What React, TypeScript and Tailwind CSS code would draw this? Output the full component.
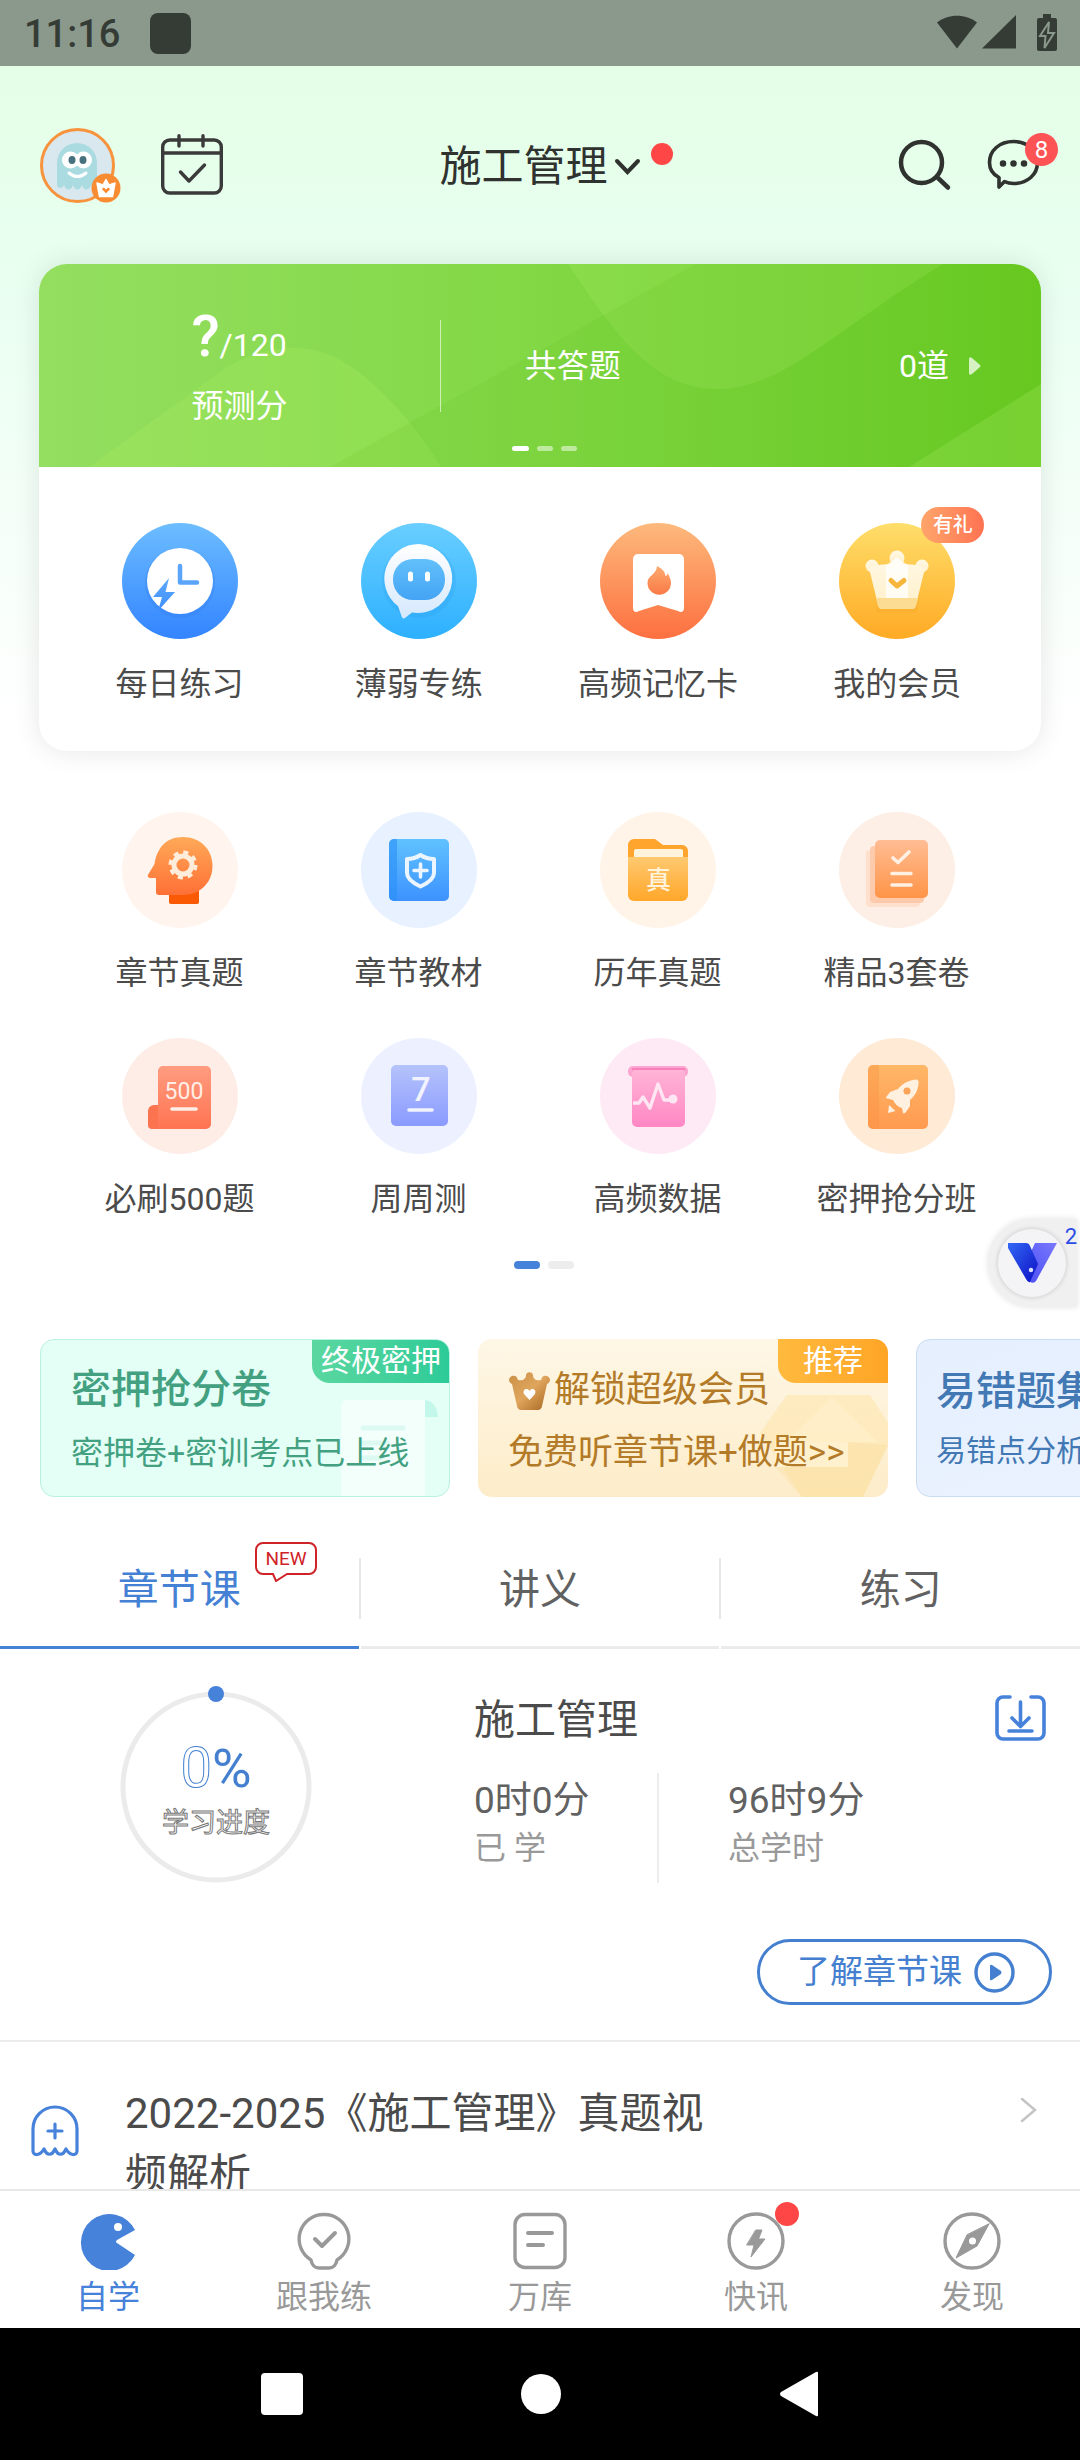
import { useState } from "react";
import type { ReactNode } from "react";

type Shortcut = {
  label: string;
  icon: ReactNode;
  badge?: string;
};

type GradientProps = {
  id: string;
  from: string;
  to: string;
};

const Gradient = ({ id, from, to }: GradientProps) => (
  <linearGradient id={id} x1="0" y1="0" x2="0" y2="1">
    <stop offset="0" stopColor={from} />
    <stop offset="1" stopColor={to} />
  </linearGradient>
);

const IconDisc = ({ fill, children }: { fill: string; children: ReactNode }) => (
  <svg viewBox="0 0 116 116" className="size-[116px]" aria-hidden="true">
    <circle cx="58" cy="58" r="58" fill={fill} />
    {children}
  </svg>
);

const primaryShortcuts: Shortcut[] = [
  {
    label: "每日练习",
    icon: (
      <IconDisc fill="url(#daily)">
        <defs>
          <Gradient id="daily" from="#6cbdff" to="#3384ff" />
          <Gradient id="dailyMark" from="#5da8fb" to="#3e8efb" />
        </defs>
        <circle cx="58" cy="60" r="35" fill="#2f78ea" opacity=".25" />
        <circle cx="58" cy="58" r="33" fill="#fff" />
        <path d="M58 43V59.500H75" fill="none" stroke="#5aa5fb" strokeWidth="4.500" strokeLinecap="round" strokeLinejoin="round" />
        <path d="M47 55L31 74H40L36 88L53 69H43.500Z" fill="url(#dailyMark)" />
      </IconDisc>
    ),
  },
  {
    label: "薄弱专练",
    icon: (
      <IconDisc fill="url(#weak)">
        <defs>
          <Gradient id="weak" from="#69ceff" to="#2db0ff" />
          <Gradient id="weakBubble" from="#ffffff" to="#d5e8fd" />
          <Gradient id="weakFace" from="#62c0fb" to="#44a4f4" />
        </defs>
        <circle cx="58" cy="58" r="37" fill="#2495e6" opacity=".2" />
        <path d="M58 21a34.500 34.500 0 1 1-7 68.500L44 95c-2 1-3 0-3.500-2L37 83A34.500 34.500 0 0 1 58 21Z" fill="url(#weakBubble)" />
        <rect x="32" y="36" width="52" height="41" rx="20" fill="url(#weakFace)" />
        <path d="M49.500 51v5M66.500 51v5" stroke="#fff" strokeWidth="5" strokeLinecap="round" />
      </IconDisc>
    ),
  },
  {
    label: "高频记忆卡",
    icon: (
      <IconDisc fill="url(#memory)">
        <defs>
          <Gradient id="memory" from="#fdb97c" to="#fd7040" />
          <Gradient id="memoryFlame" from="#fdaa70" to="#fa7a45" />
        </defs>
        <path d="M38 31H79a5 5 0 0 1 5 5V85c0 4-3 5-6 3L58 82 39 88c-3 2-6 1-6-3V36a5 5 0 0 1 5-5Z" fill="#fff" />
        <path d="M57 43c6 3 8 6 8.500 10 1 0 2-1 2-3 3 5 3.500 8 3.500 10a11.700 11.700 0 0 1-23.500 0c0-8 9-8 9.500-17Z" fill="url(#memoryFlame)" />
      </IconDisc>
    ),
  },
  {
    label: "我的会员",
    badge: "有礼",
    icon: (
      <IconDisc fill="url(#vip)">
        <defs>
          <Gradient id="vip" from="#fede6a" to="#ffaa24" />
          <Gradient id="vipCrown" from="#fff8e4" to="#fff0ca" />
        </defs>
        <path d="M36 56H82L78 90H38Z" fill="#e89a18" opacity=".15" />
        <g fill="url(#vipCrown)">
          <circle cx="33" cy="43" r="6.500" />
          <circle cx="58" cy="35" r="7.500" />
          <circle cx="83" cy="43" r="6.500" />
          <path d="M30 45 39 82c1 3 2 4 4 4H73c2 0 3-1 4-4L86 45 78 42 65 41 58 34 51 41 38 42Z" />
        </g>
        <path d="M47 42 58 35 69 42V75H47Z" fill="#fff" opacity=".75" />
        <path d="M37 75H79L77 83c-1 2-2 3-4 3H43c-2 0-3-1-4-3Z" fill="#fbdc92" />
        <path d="M52 57.500 58 63 65 57.500" fill="none" stroke="#f6b53b" strokeWidth="5" strokeLinecap="round" strokeLinejoin="round" />
      </IconDisc>
    ),
  },
];

const secondaryShortcuts: Shortcut[] = [
  {
    label: "章节真题",
    icon: (
      <IconDisc fill="#fff5ee">
        <defs>
          <Gradient id="head" from="#ffa958" to="#ff7036" />
        </defs>
        <path d="M47 78H77V90a2 2 0 0 1-2 2H49a2 2 0 0 1-2-2Z" fill="#fb5a05" />
        <path d="M61 25c17 0 29.500 12 29.500 29 0 12-6 20-14 25-4 3-12 4-18 4H37c-2 0-3-1-3-3V66H29c-3 0-4-2-2.500-4l6-10C35 36 44 25 61 25Z" fill="url(#head)" />
        <circle cx="61" cy="53" r="9" fill="none" stroke="#ffeddb" strokeWidth="5" />
        <circle cx="61" cy="53" r="12.500" fill="none" stroke="#ffeddb" strokeWidth="4" strokeDasharray="5 4.800" />
      </IconDisc>
    ),
  },
  {
    label: "章节教材",
    icon: (
      <IconDisc fill="#e7f1ff">
        <defs>
          <Gradient id="book" from="#60c2ff" to="#3d92ff" />
        </defs>
        <rect x="28" y="27" width="60" height="62" rx="5" fill="url(#book)" />
        <path d="M33 27H36V89H33a5 5 0 0 1-5-5V32a5 5 0 0 1 5-5Z" fill="#2b90f6" opacity=".6" />
        <path d="M59.500 43C55 46 51 47 46 47V61c0 6 6 10 13.500 13.500C67 71 73 67 73 61V47C68 47 64 46 59.500 43Z" fill="none" stroke="#eaf5ff" strokeWidth="4" strokeLinejoin="round" />
        <path d="M53 58.500H66M59.500 52V65" stroke="#eaf5ff" strokeWidth="3.600" strokeLinecap="round" />
      </IconDisc>
    ),
  },
  {
    label: "历年真题",
    icon: (
      <IconDisc fill="#fff4e7">
        <defs>
          <Gradient id="folder" from="#ffc970" to="#ffa72a" />
        </defs>
        <path d="M34 27H55L63 33H82a6 6 0 0 1 6 6V50H28V33a6 6 0 0 1 6-6Z" fill="#ffa42c" />
        <path d="M36 37H81a2 2 0 0 1 2 2V50H34V39a2 2 0 0 1 2-2Z" fill="#fff3dc" />
        <path d="M28 45H88V83a6 6 0 0 1-6 6H34a6 6 0 0 1-6-6Z" fill="url(#folder)" />
        <text x="58.500" y="77" textAnchor="middle" fontSize="25" fontWeight="500" fill="#fff3dc">真</text>
      </IconDisc>
    ),
  },
  {
    label: "精品3套卷",
    icon: (
      <IconDisc fill="#fdefe5">
        <defs>
          <Gradient id="papers" from="#ffbd94" to="#ff9447" />
        </defs>
        <rect x="27" y="38" width="54" height="57" rx="4" fill="#fee0cd" />
        <rect x="31" y="34" width="54" height="57" rx="4" fill="#fdcbab" />
        <rect x="36" y="28" width="53" height="58" rx="5" fill="url(#papers)" />
        <path d="M54 46 59 50.500 70 40M53 61.500H72M53 73H72" fill="none" stroke="#fff0e3" strokeWidth="3.600" strokeLinecap="round" strokeLinejoin="round" />
      </IconDisc>
    ),
  },
  {
    label: "必刷500题",
    icon: (
      <IconDisc fill="#feede7">
        <defs>
          <Gradient id="brush" from="#ff9c80" to="#ff7452" />
        </defs>
        <path d="M32 67H46V91H30a4 4 0 0 1-4-4V73a6 6 0 0 1 6-6Z" fill="#fc7350" />
        <path d="M41 28H84a5 5 0 0 1 5 5V86a5 5 0 0 1-5 5H32c3 0 4-2 4-5V33a5 5 0 0 1 5-5Z" fill="url(#brush)" />
        <text x="62" y="61" textAnchor="middle" fontSize="23" fill="#ffeee8">500</text>
        <path d="M50 71H74" stroke="#ffeee8" strokeWidth="3.600" strokeLinecap="round" />
      </IconDisc>
    ),
  },
  {
    label: "周周测",
    icon: (
      <IconDisc fill="#edf1ff">
        <defs>
          <Gradient id="week" from="#b5c3fb" to="#8a9aff" />
        </defs>
        <rect x="30" y="27" width="57" height="61" rx="5" fill="url(#week)" />
        <text x="60" y="63" textAnchor="middle" fontSize="34" fontWeight="500" fill="#f1f3ff">7</text>
        <path d="M48 72H71" stroke="#f1f3ff" strokeWidth="3.600" strokeLinecap="round" />
      </IconDisc>
    ),
  },
  {
    label: "高频数据",
    icon: (
      <IconDisc fill="#feeaf5">
        <defs>
          <Gradient id="data" from="#ffb4d6" to="#ff87c4" />
        </defs>
        <rect x="28" y="28" width="60" height="11" rx="5" fill="#fba5d0" />
        <rect x="32" y="30" width="53" height="7" fill="#f77fbb" />
        <path d="M34 32H83a2 2 0 0 1 2 2V84a5 5 0 0 1-5 5H37a5 5 0 0 1-5-5V34a2 2 0 0 1 2-2Z" fill="url(#data)" />
        <path d="M33 65H39L43 59 50 70 58 46 64 62H72" fill="none" stroke="#ffe6f3" strokeWidth="3.400" strokeLinejoin="round" />
        <circle cx="73" cy="61" r="4.500" fill="#ffe6f3" />
      </IconDisc>
    ),
  },
  {
    label: "密押抢分班",
    icon: (
      <IconDisc fill="#ffead6">
        <defs>
          <Gradient id="rocket" from="#ffb768" to="#ff9a50" />
        </defs>
        <rect x="29" y="27" width="60" height="64" rx="5" fill="url(#rocket)" />
        <path d="M34 27H40V91H34a5 5 0 0 1-5-5V32a5 5 0 0 1 5-5Z" fill="#f98e3c" opacity=".35" />
        <path d="M78 41.500C69 42 63 46 59 51L51 54 46.500 60 54 62C56 66 59 69 63 70L64 75C65 76 66 75 67 74L71 68V62C77 57 80 50 79.500 43Z" fill="#fff0df" />
        <circle cx="68" cy="53" r="3.500" fill="#fba458" />
        <path d="M50 67 56.500 73 49 75Z" fill="#fff0df" />
      </IconDisc>
    ),
  },
];

const ShortcutButton = ({ label, icon, badge }: Shortcut) => (
  <button type="button" className="flex flex-col items-center gap-[21px]">
    <span className="relative">
      {icon}
      {badge && (
        <span className="absolute -top-4 left-[82px] flex h-9 w-[63px] items-center justify-center rounded-full bg-linear-to-r from-[#fea56b] to-[#ff7252] text-xl font-medium text-white">
          {badge}
        </span>
      )}
    </span>
    <span className="text-[32px] leading-[48px] whitespace-nowrap text-[#4b4b4b]">{label}</span>
  </button>
);

const StatusBar = () => (
  <div className="flex h-[66px] shrink-0 items-center justify-between bg-[#8a998b] pr-[22px] pl-6 text-[#353c36]">
    <div className="flex items-center gap-[30px]">
      <span className="pt-0.5 text-[38px] leading-none font-medium">11:16</span>
      <span className="size-[41px] rounded-lg bg-[#353c36]" />
    </div>
    <svg width="122" height="38" viewBox="0 0 122 38" fill="currentColor" aria-hidden="true">
      <path d="M1 8.500C12-.5 30-.5 41 8.500L21 34.500Z" />
      <path d="M80 1V34.500H46Z" />
      <path d="M107 0h8v4h4a2 2 0 0 1 2 2V35a2 2 0 0 1-2 2H103a2 2 0 0 1-2-2V6a2 2 0 0 1 2-2h4Z" />
      <path d="M113 8 104 22H109.500L108.500 34 118 19H112Z" fill="#353c36" stroke="#8a998b" strokeWidth="2" />
    </svg>
  </div>
);

const Header = () => (
  <header className="grid h-[198px] grid-cols-3 items-center px-[22px] text-[#2f322f]">
    <div className="flex items-center gap-[46px] pl-[18px]">
      <button type="button" aria-label="个人中心" className="relative">
        <svg width="75" height="75" viewBox="0 0 75 75" aria-hidden="true">
          <circle cx="37.500" cy="37.500" r="36" fill="#d9e7ee" stroke="#f7923d" strokeWidth="3" />
          <path d="M17 56V35a20 20 0 0 1 40 0V56c0 5-5 5-6 1-2 6-7 6-9 0-2 6-7 6-9 0-2 6-7 6-9 0-2 4-7 4-7-1Z" fill="#a9dbe0" />
          <circle cx="30.500" cy="32" r="8.500" fill="#fff" />
          <circle cx="43.500" cy="32" r="8.500" fill="#fff" />
          <ellipse cx="32" cy="32" rx="3.500" ry="4" fill="#47717c" />
          <ellipse cx="43" cy="32" rx="3.500" ry="4" fill="#47717c" />
          <path d="M29 45q8.500 7 17 0" fill="none" stroke="#fff" strokeWidth="3" strokeLinecap="round" />
        </svg>
        <svg width="30" height="30" viewBox="0 0 30 30" className="absolute -right-1.5 bottom-0" aria-hidden="true">
          <circle cx="15" cy="15" r="14.500" fill="#f98b32" />
          <path d="M6 10 12 12 15 6.500 18 12 24 10 21.500 23.500H8.500Z" fill="#fff" stroke="#fff" strokeWidth="1.500" strokeLinejoin="round" />
          <path d="M12.500 16 15 18.500 17.500 16" fill="none" stroke="#f98b32" strokeWidth="2.500" strokeLinecap="round" />
        </svg>
      </button>
      <button type="button" aria-label="打卡">
        <svg width="62" height="62" viewBox="0 0 62 62" fill="none" stroke="#3b3a3b" strokeWidth="3.400" strokeLinecap="round" strokeLinejoin="round" aria-hidden="true">
          <rect x="1.700" y="6" width="58.600" height="53" rx="7" />
          <path d="M2 19H60M18 1.700V12M42 1.700V12M19.500 38 28 47 43.500 31" />
        </svg>
      </button>
    </div>

    <button type="button" className="relative flex items-center gap-1.5 justify-self-center pt-1 text-[42px] leading-[60px] whitespace-nowrap">
      施工管理
      <svg width="27" height="18" viewBox="0 0 27 18" fill="none" stroke="currentColor" strokeWidth="4" strokeLinecap="round" aria-hidden="true">
        <path d="M3 3 13.500 14 24 3" />
      </svg>
      <span className="absolute top-2.5 -right-8 size-[22px] rounded-full bg-[#fd4645]" />
    </button>

    <div className="flex items-center justify-end gap-[34px]">
      <button type="button" aria-label="搜索">
        <svg width="54" height="52" viewBox="0 0 54 52" fill="none" stroke="#2f322f" strokeWidth="4.500" strokeLinecap="round" aria-hidden="true">
          <circle cx="23.500" cy="23.500" r="20.500" />
          <path d="M40 39 50 48.500" />
        </svg>
      </button>
      <button type="button" aria-label="消息" className="relative pr-[18px]">
        <svg width="54" height="52" viewBox="0 0 54 52" fill="none" stroke="#2f322f" strokeWidth="3.600" strokeLinejoin="round" aria-hidden="true">
          <path d="M27.500 2.500c14 0 24 9 24 21s-10 21-24 21c-4 0-7-1-9-2L13 48V38.500C6 35 3.500 30 3.500 23.500c0-12 10-21 24-21Z" />
          <path d="M17 24.500h.01M27.500 24.500h.01M38 24.500h.01" strokeWidth="6.500" strokeLinecap="round" />
        </svg>
        <span className="absolute -top-1.5 right-0 flex size-[33px] items-center justify-center rounded-full bg-[#fd5355] text-2xl leading-none text-white">
          8
        </span>
      </button>
    </div>
  </header>
);

const ScoreBanner = () => (
  <div className="relative overflow-hidden rounded-t-[28px] bg-linear-to-r from-[#94de60] via-[#82d844] to-[#69ca21] pt-[22px] pb-4 text-white">
    <svg viewBox="0 0 1002 203" preserveAspectRatio="none" className="absolute inset-0 size-full" fill="#a8ec62" aria-hidden="true">
      <path d="M50 203 188 103Q264 60 326 113 370 150 402 203Z" opacity=".28" />
      <path d="M529 0C570 60 610 125 677 125S790 70 904 0Z" opacity=".25" />
      <path d="M291 203 657 0H1002V203Z" fill="#5abf18" opacity=".12" />
      <path d="M870 203 1002 120V203Z" opacity=".25" />
    </svg>
    <div className="relative flex h-40 items-center text-[32px] leading-10">
      <div className="flex w-2/5 justify-center">
        <div>
          <p className="leading-[58px]">
            <strong className="text-[58px] font-medium">?</strong>/120
          </p>
          <p className="mt-3">预测分</p>
        </div>
      </div>
      <span className="h-[92px] w-px bg-white/60" />
      <div className="flex flex-1 items-center justify-between pr-[60px] pl-[84px]">
        <span>共答题</span>
        <button type="button" className="flex items-center gap-5">
          0道
          <svg width="12" height="18" viewBox="0 0 12 18" fill="#d7f2c2" aria-hidden="true">
            <path d="M0 2Q0-1 3 1L11 8Q12 9 11 10L3 17Q0 19 0 16Z" />
          </svg>
        </button>
      </div>
    </div>
    <div className="relative flex h-[5px] justify-center gap-2 pl-2">
      <span className="w-[17px] rounded-sm bg-white" />
      <span className="w-4 rounded-sm bg-white/50" />
      <span className="w-4 rounded-sm bg-white/50" />
    </div>
  </div>
);

const FloatingAssistant = () => (
  <button
    type="button"
    aria-label="助手"
    className="absolute right-[3px] -bottom-[38px] flex h-[88px] w-[89px] items-center rounded-l-full bg-[#f0f0f0] pl-2.5 shadow-[0_0_6px_rgba(0,0,0,0.12)]"
  >
    <span className="flex size-[68px] items-center justify-center rounded-full bg-[#f4f4f6] shadow-[0_0_5px_rgba(0,0,0,0.18)]">
      <svg width="49" height="40" viewBox="0 0 49 40" aria-hidden="true">
        <defs>
          <linearGradient id="vLeft" x1="0" y1="0" x2="1" y2="1">
            <stop offset="0" stopColor="#3268f6" />
            <stop offset="1" stopColor="#0d0fc4" />
          </linearGradient>
          <linearGradient id="vRight" x1="1" y1="0" x2="0" y2="1">
            <stop offset="0" stopColor="#7a78fd" />
            <stop offset="1" stopColor="#4b4ff3" />
          </linearGradient>
        </defs>
        <path d="M27 0H49L28 38Q26 41 22 39L17 22Z" fill="url(#vRight)" />
        <path d="M0 0H18Q21 0 22 3L30 21 22 39Q20 40 18 36L0 5Z" fill="url(#vLeft)" />
        <circle cx="23" cy="27" r="2.200" fill="#dfe4ff" />
      </svg>
    </span>
    <span className="absolute top-1.5 right-0 text-[22px] leading-6 text-[#2b4be8]">2</span>
  </button>
);

const PromoStrip = () => (
  <section className="mt-[70px] flex gap-7 overflow-hidden pl-10 whitespace-nowrap">
    <a href="#sprint" className="relative block h-[158px] w-[410px] shrink-0 overflow-hidden rounded-[14px] border border-[#b9f1e2] bg-[#e4fff6] pt-6 pl-[30px] text-[#43a181]">
      <svg width="108" height="96" viewBox="0 0 108 96" className="absolute right-0 bottom-0" aria-hidden="true">
        <path d="M84 0Q96 2 97 17H84Z" fill="#c3f7ea" />
        <path d="M6 0H84V96H0V8Q0 0 6 0Z" fill="#f2fffb" />
        <path d="M22 28H62M22 43H46M22 58H40" stroke="#dcfaf1" strokeWidth="5" strokeLinecap="round" />
      </svg>
      <h3 className="relative text-[40px] leading-[52px] font-medium">密押抢分卷</h3>
      <p className="relative mt-[15px] text-[32px] leading-[44px]">密押卷+密训考点已上线</p>
      <span className="absolute -top-px -right-px h-11 rounded-bl-[18px] bg-linear-to-r from-[#5ad7a0] to-[#2bcb98] px-[9px] text-[30px] leading-[44px] text-white">
        终极密押
      </span>
    </a>

    <a href="#vip" className="relative block h-[158px] w-[410px] shrink-0 overflow-hidden rounded-[14px] bg-linear-to-b from-[#fef7e6] to-[#fdecc9] pt-[25px] pl-[30px] text-[#b37a27]">
      <svg width="128" height="102" viewBox="0 0 128 102" className="absolute right-0 bottom-0" aria-hidden="true">
        <path d="M27 0H110L128 28V50L103 102H42L0 38Z" fill="#fde3a6" opacity=".5" />
        <path d="M72 2 118 47H26Z" fill="#fff0cb" opacity=".7" />
        <path d="M15 47H88V72H15Z" fill="#fff3d6" opacity=".7" />
        <path d="M15 72H88V47L128 50 103 102H42Z" fill="#fbdc96" opacity=".3" />
      </svg>
      <h3 className="relative flex items-center gap-[3px] text-[36px] leading-[52px]">
        <svg width="43" height="40" viewBox="0 0 43 40" aria-hidden="true">
          <defs>
            <linearGradient id="promoCrown" x1="0" y1="0" x2="1" y2="1">
              <stop offset="0" stopColor="#cb9048" />
              <stop offset=".5" stopColor="#e0a55c" />
              <stop offset="1" stopColor="#a4641f" />
            </linearGradient>
          </defs>
          <path d="M4 6c3-1 5 0 6 4 5 1 8-1 8-5a3.600 3.600 0 0 1 7 0c0 4 3 6 8 5 1-4 3-5 6-4 4 2 4 6 0 8l-5 22c0 2-2 4-4 4H13c-2 0-4-2-4-4L4 14C0 12 0 8 4 6Z" fill="url(#promoCrown)" />
          <path d="M21.500 30 16 24c-2-4 3-7 5.500-3 2.500-4 7.500-1 5.500 3Z" fill="#fff" />
        </svg>
        解锁超级会员
      </h3>
      <p className="relative mt-[15px] text-[35px] leading-[44px]">免费听章节课+做题&gt;&gt;</p>
      <span className="absolute top-0 right-0 h-11 rounded-bl-[18px] bg-linear-to-r from-[#ffba3e] to-[#ffa525] px-[25px] text-[30px] leading-[44px] text-white">
        推荐
      </span>
    </a>

    <a href="#mistakes" className="relative block h-[158px] w-[410px] shrink-0 overflow-hidden rounded-[14px] border border-[#c9dcf3] bg-linear-to-br from-[#e5effe] to-[#ecf3ff] pt-[26px] pl-[19px] text-[#4279b4]">
      <h3 className="text-[40px] leading-[52px] font-medium">易错题集</h3>
      <p className="mt-[11px] text-[30px] leading-[44px]">易错点分析</p>
    </a>
  </section>
);

const courseTabs = ["章节课", "讲义", "练习"];

const CourseTabs = () => {
  const [active, setActive] = useState(0);

  return (
    <div role="tablist" className="mt-[33px] grid grid-cols-3 gap-0.5">
      {courseTabs.map((tab, idx) => (
        <button
          key={tab}
          type="button"
          role="tab"
          aria-selected={idx === active}
          onClick={() => setActive(idx)}
          className={`relative h-[119px] border-b-3 pt-[3px] text-[41px] leading-[60px] ${
            idx === active ? "border-[#4480d4] text-[#4480d4]" : "border-[#ebebeb] text-[#616161]"
          }`}
        >
          {tab}
          {idx === 0 && (
            <span className="absolute top-3 left-[255px] h-10 w-[62px] text-center text-[19px] leading-[34px] text-[#cf2328]">
              <svg viewBox="0 0 62 40" fill="none" stroke="currentColor" strokeWidth="2" className="absolute inset-0" aria-hidden="true">
                <path d="M8 1H54a7 7 0 0 1 7 7V25a7 7 0 0 1-7 7H32L21 39 18 32H8a7 7 0 0 1-7-7V8a7 7 0 0 1 7-7Z" />
              </svg>
              NEW
            </span>
          )}
          {idx > 0 && <span className="absolute top-7 -left-0.5 h-[61px] w-0.5 bg-[#e8e8e8]" />}
        </button>
      ))}
    </div>
  );
};

const CourseProgress = () => (
  <section className="flex border-b-2 border-[#ebebeb] pt-9 pb-[35px]">
    <div className="w-2/5">
      <div className="relative mx-auto size-[204px]">
        <svg viewBox="0 0 204 204" className="absolute inset-0" aria-hidden="true">
          <circle cx="102" cy="102" r="93" fill="none" stroke="#ebebeb" strokeWidth="5" />
          <circle cx="102" cy="9" r="8" fill="#4681da" />
        </svg>
        <div className="relative pt-[51px] text-center">
          <p className="text-[56px] leading-16 text-[#4480cf]">
            <span className="text-transparent [-webkit-text-stroke:1px_#4480cf]">0</span>
            <span className="text-[54px]">%</span>
          </p>
          <p className="mt-1 text-[27px] leading-9 text-transparent [-webkit-text-stroke:1px_#777]">学习进度</p>
        </div>
      </div>
    </div>

    <div className="flex flex-1 flex-col pr-[28px] pl-[42px]">
      <div className="flex items-center justify-between pr-1.5">
        <h2 className="pt-1 text-[41px] leading-[62px] text-[#4b4b4b]">施工管理</h2>
        <button type="button" aria-label="下载">
          <svg width="51" height="46" viewBox="0 0 51 46" fill="none" stroke="#4681da" strokeWidth="3.600" strokeLinecap="round" strokeLinejoin="round" aria-hidden="true">
            <path d="M15 2H8a6 6 0 0 0-6 6V38a6 6 0 0 0 6 6H43a6 6 0 0 0 6-6V8a6 6 0 0 0-6-6H36" />
            <path d="M25.500 7V31M17 23 25.500 31.500 34 23M14 36H37" />
          </svg>
        </button>
      </div>
      <dl className="mt-[22px] flex text-[32px] leading-[44px] text-[#999]">
        <div className="flex h-[110px] w-[185px] flex-col-reverse justify-end border-r-2 border-[#ededed] pt-[3px]">
          <dt>已 学</dt>
          <dd className="text-[37px] leading-[50px] text-[#616161]">0时0分</dd>
        </div>
        <div className="flex flex-col-reverse justify-end pt-[3px] pl-[69px]">
          <dt>总学时</dt>
          <dd className="text-[37px] leading-[50px] text-[#616161]">96时9分</dd>
        </div>
      </dl>
      <button type="button" className="mt-14 flex h-[66px] w-[295px] items-center gap-3 self-end rounded-full border-3 border-[#4480cf] pl-[37px] text-[33px] leading-10 whitespace-nowrap text-[#4480cf]">
        了解章节课
        <svg width="41" height="41" viewBox="0 0 41 41" aria-hidden="true">
          <circle cx="20.500" cy="20.500" r="18.500" fill="none" stroke="currentColor" strokeWidth="3.400" />
          <path d="M16 14Q16 12 18 13L27 19Q28 20.500 27 22L18 28Q16 29 16 27Z" fill="currentColor" />
        </svg>
      </button>
    </div>
  </section>
);

const LessonRow = () => (
  <a href="#lesson" className="flex items-start pt-[41px] pr-[43px] pl-[31px] text-[#4b4b4b]">
    <svg width="48" height="52" viewBox="0 0 48 52" className="mt-[22px] shrink-0" fill="none" stroke="#4681da" strokeWidth="3.200" strokeLinecap="round" strokeLinejoin="round" aria-hidden="true">
      <path d="M2 46V24a22 22 0 0 1 44 0V46c0 5-7 5-11-2-3 7-8 7-11 0-3 7-8 7-11 0-4 7-11 7-11 2Z" />
      <path d="M17 26H31M24 19V33" />
    </svg>
    <p className="ml-[46px] max-w-[620px] text-[42px] leading-[61px]">2022-2025《施工管理》真题视频解析</p>
    <svg width="17" height="26" viewBox="0 0 17 26" className="mt-[14px] ml-auto shrink-0" fill="none" stroke="#c4c4c4" strokeWidth="2.500" strokeLinecap="round" aria-hidden="true">
      <path d="M2 2 15 13 2 24" />
    </svg>
  </a>
);

const navItems = [
  {
    label: "自学",
    icon: (
      <>
        <path d="M56 18A28.500 28.500 0 1 0 56 43L38 31Q36 30 38 28Z" fill="currentColor" stroke="none" />
        <circle cx="39" cy="15" r="4" fill="#fff" stroke="none" />
      </>
    ),
  },
  {
    label: "跟我练",
    icon: (
      <>
        <path d="M29 2.500A24.500 24.500 0 0 1 42 48C41 53 38 56 34 56H24C20 56 17 53 16 48A24.500 24.500 0 0 1 29 2.500Z" />
        <path d="M20 27 27 34 40 21" strokeWidth="4" />
      </>
    ),
  },
  {
    label: "万库",
    icon: (
      <>
        <rect x="4" y="2.500" width="50" height="53" rx="10" />
        <path d="M17 21H41M17 33H32" strokeWidth="4" />
      </>
    ),
  },
  {
    label: "快讯",
    dot: true,
    icon: (
      <>
        <circle cx="29" cy="29" r="27" />
        <path d="M29 18H35L31.500 27H38L24 45 27 33H20Z" fill="currentColor" strokeWidth="1" />
      </>
    ),
  },
  {
    label: "发现",
    icon: (
      <>
        <circle cx="29" cy="29" r="27" />
        <path d="M46 12 34 34 13 46 24 23Z" fill="currentColor" strokeWidth="1" />
        <circle cx="29.500" cy="29" r="3.500" fill="#fff" stroke="none" />
      </>
    ),
  },
];

const BottomNav = () => {
  const [current, setCurrent] = useState("自学");

  return (
    <nav className="grid shrink-0 grid-cols-5 border-t-2 border-[#e8e8e8] bg-white pt-[21px] pb-1.5">
      {navItems.map(({ label, icon, dot }) => (
        <button
          key={label}
          type="button"
          onClick={() => setCurrent(label)}
          className={`flex flex-col items-center gap-0.5 text-[32px] leading-[50px] ${
            label === current ? "text-[#4681da]" : "text-[#999]"
          }`}
        >
          <span className="relative">
            <svg width="58" height="58" viewBox="0 0 58 58" fill="none" stroke="currentColor" strokeWidth="3.400" strokeLinecap="round" strokeLinejoin="round" aria-hidden="true">
              {icon}
            </svg>
            {dot && <span className="absolute -top-2.5 -right-3.5 size-6 rounded-full bg-[#fd4645]" />}
          </span>
          {label}
        </button>
      ))}
    </nav>
  );
};

const SystemBar = () => (
  <div className="flex h-[132px] shrink-0 items-center justify-center gap-[218px] bg-black">
    <button type="button" aria-label="最近任务" className="size-[42px] rounded-sm bg-white" />
    <button type="button" aria-label="主屏幕" className="size-10 rounded-full bg-white" />
    <button type="button" aria-label="返回">
      <svg width="40" height="46" viewBox="0 0 40 46" fill="#fff" aria-hidden="true">
        <path d="M39 2V44Q39 46 37 45L2 25Q0 23 2 21L37 1Q39 0 39 2Z" />
      </svg>
    </button>
  </div>
);

export default function App() {
  return (
    <div className="flex h-screen flex-col overflow-hidden bg-white font-[Roboto,'Noto_Sans_CJK_SC',sans-serif]">
      <StatusBar />
      <main className="min-h-0 flex-1 overflow-hidden bg-[linear-gradient(to_bottom,#e4ffe6_0,#e8fff0_200px,#ffffff_660px)]">
        <Header />

        <section className="mx-[39px] rounded-[28px] bg-white shadow-[0_0_28px_rgba(0,0,0,0.1)]">
          <ScoreBanner />
          <div className="grid grid-cols-4 pt-14 pr-6 pb-[43px] pl-[21px]">
            {primaryShortcuts.map((item) => (
              <ShortcutButton key={item.label} {...item} />
            ))}
          </div>
        </section>

        <section className="relative mt-[61px]">
          <div className="grid grid-cols-4 gap-y-[41px] pr-16 pl-[60px]">
            {secondaryShortcuts.map((item) => (
              <ShortcutButton key={item.label} {...item} />
            ))}
          </div>
          <div className="mt-[38px] flex h-2 justify-center gap-2 pl-2">
            <span className="w-[26px] rounded-full bg-[#4681da]" />
            <span className="w-[26px] rounded-full bg-[#ededed]" />
          </div>
          <FloatingAssistant />
        </section>

        <PromoStrip />
        <CourseTabs />
        <CourseProgress />
        <LessonRow />
      </main>
      <BottomNav />
      <SystemBar />
    </div>
  );
}
